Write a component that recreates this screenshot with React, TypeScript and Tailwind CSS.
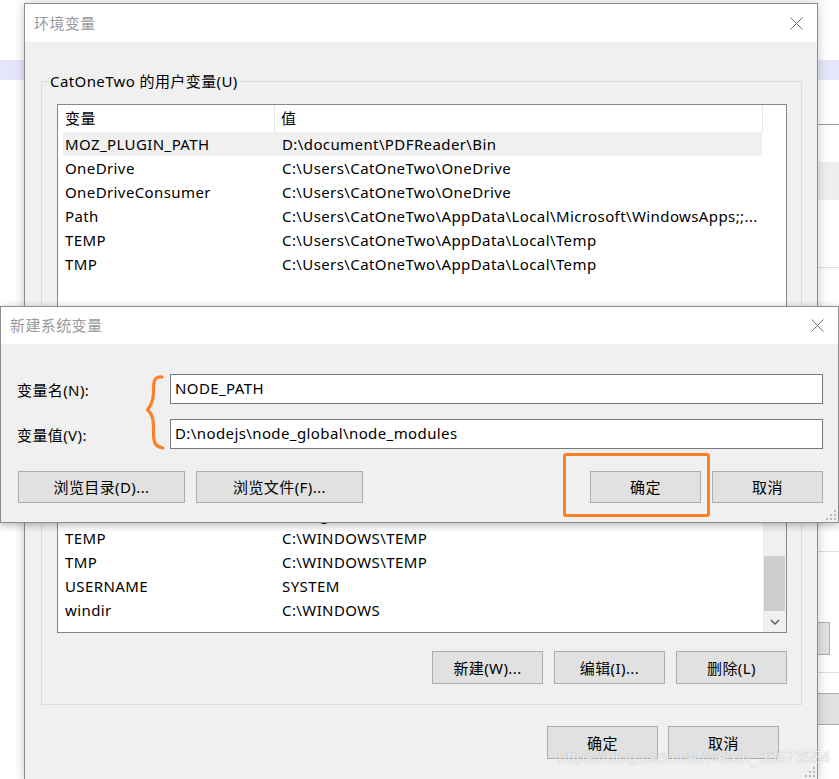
import type { ReactNode } from 'react'

const userVars = [
  ['MOZ_PLUGIN_PATH', 'D:\\document\\PDFReader\\Bin'],
  ['OneDrive', 'C:\\Users\\CatOneTwo\\OneDrive'],
  ['OneDriveConsumer', 'C:\\Users\\CatOneTwo\\OneDrive'],
  ['Path', 'C:\\Users\\CatOneTwo\\AppData\\Local\\Microsoft\\WindowsApps;;...'],
  ['TEMP', 'C:\\Users\\CatOneTwo\\AppData\\Local\\Temp'],
  ['TMP', 'C:\\Users\\CatOneTwo\\AppData\\Local\\Temp'],
]

const systemVars = [
  ['NUMBER_OF_PROCESSORS', '8'],
  ['OS', 'Windows_NT'],
  ['Path', 'C:\\WINDOWS\\system32;C:\\WINDOWS;C:\\WINDOWS\\System32\\Wbem;...'],
  ['PSModulePath', '%ProgramFiles%\\WindowsPowerShell\\Modules;C:\\WINDOWS\\...'],
  ['TEMP', 'C:\\WINDOWS\\TEMP'],
  ['TMP', 'C:\\WINDOWS\\TEMP'],
  ['USERNAME', 'SYSTEM'],
  ['windir', 'C:\\WINDOWS'],
]

function CloseIcon() {
  return (
    <svg width="13" height="13" viewBox="0 0 13 13">
      <path d="M0.5 0.5L12.5 12.5M12.5 0.5L0.5 12.5" stroke="#707070" strokeWidth="1" />
    </svg>
  )
}

function Grip() {
  return (
    <svg width="12" height="12" viewBox="0 0 12 12" fill="#b8b8b8">
      <rect x="9" y="1" width="2" height="2" />
      <rect x="5" y="5" width="2" height="2" />
      <rect x="9" y="5" width="2" height="2" />
      <rect x="1" y="9" width="2" height="2" />
      <rect x="5" y="9" width="2" height="2" />
      <rect x="9" y="9" width="2" height="2" />
    </svg>
  )
}

function Btn({ children, w, h = 'h-[33px]' }: { children: ReactNode; w: string; h?: string }) {
  return (
    <div className={`flex shrink-0 items-center justify-center border border-[#adadad] bg-[#e1e1e1] leading-[20px] ${w} ${h}`}>
      {children}
    </div>
  )
}

function Row({ name, value, selected }: { name: string; value: string; selected?: boolean }) {
  return (
    <div className={`flex h-[24px] shrink-0 items-center leading-[24px] ${selected ? 'bg-[#f0f0f0]' : ''}`}>
      <div className="w-[212px] shrink-0 truncate pl-[2px]">{name}</div>
      <div className="min-w-0 flex-1 truncate whitespace-nowrap pl-[7px]">{value}</div>
    </div>
  )
}

export default function App() {
  return (
    <div className="relative h-[779px] w-[839px] overflow-hidden bg-white font-['Noto_Sans','Noto_Sans_CJK_SC',sans-serif] text-[15px] tracking-[0.4px] text-black">
      {/* page behind the dialogs */}
      <div className="flex h-full w-full justify-between">
        <div className="flex w-[24px] flex-col">
          <div className="h-[60px]" />
          <div className="h-[20px] bg-[#e6e6fa]" />
        </div>
        <div className="flex w-[22px] flex-col">
          <div className="h-[60px]" />
          <div className="h-[20px] bg-[#e6e6fa]" />
          <div className="h-[44px]" />
          <div className="h-px bg-[#9c9c9c]" />
          <div className="h-[37px]" />
          <div className="h-[38px] bg-[#efefef]" />
          <div className="h-[67px]" />
          <div className="h-px bg-[#dedede]" />
          <div className="h-[283px]" />
          <div className="h-px bg-[#dedede]" />
          <div className="h-[70px]" />
          <div className="h-[33px] w-[13px] border border-[#adadad] bg-[#e1e1e1]" />
          <div className="h-[17px]" />
          <div className="h-px bg-[#dedede]" />
          <div className="h-[20px]" />
          <div className="h-[32px] border-y border-[#adadad] bg-[#e1e1e1]" />
        </div>
      </div>

      {/* 环境变量 dialog */}
      <div className="absolute left-[24px] top-[3px] flex h-[778px] w-[794px] flex-col border border-[#8e8e8e] bg-[#f0f0f0] shadow-[0_0_10px_rgba(0,0,0,0.22)]">
        <div className="flex h-[38px] shrink-0 items-center justify-between bg-white pl-[9px] pr-[14px] text-[#9a9a9a]">
          <span>环境变量</span>
          <CloseIcon />
        </div>
        <div className="flex min-w-0 flex-1 flex-col pl-[16px] pr-[15px]">
          <fieldset className="mt-[29px] min-w-0 border border-[#dcdcdc]">
            <legend className="ml-[7px] px-[1px] leading-[20px]">CatOneTwo 的用户变量(U)</legend>
            <div className="pb-[20px] pl-[15px] pr-[14px]">
              <div className="mt-[13px] flex h-[215px] flex-col border border-[#828790] bg-white">
                <div className="flex h-[27px] shrink-0">
                  <div className="w-[5px]" />
                  <div className="flex w-[700px] items-center">
                    <div className="w-[212px] border-r border-[#e5e5e5] pl-[2px] leading-[27px]">变量</div>
                    <div className="flex-1 border-r border-[#e5e5e5] pl-[6px] leading-[27px]">值</div>
                  </div>
                </div>
                <div className="ml-[5px] flex w-[699px] flex-col">
                  {userVars.map(([n, v], i) => (
                    <Row key={n} name={n} value={v} selected={i === 0} />
                  ))}
                </div>
              </div>
              <div className="mt-[18px] flex justify-end gap-[11px]">
                <Btn w="w-[111px]">新建(N)...</Btn>
                <Btn w="w-[111px]">编辑(E)...</Btn>
                <Btn w="w-[111px]">删除(D)</Btn>
              </div>
            </div>
          </fieldset>

          <fieldset className="mt-[29px] min-w-0 border border-[#dcdcdc]">
            <legend className="ml-[7px] px-[1px] leading-[20px]">系统变量(S)</legend>
            <div className="pb-[20px] pl-[15px] pr-[14px]">
              <div className="mt-[13px] flex h-[180px] border border-[#828790] bg-white">
                <div className="flex w-0 min-w-0 flex-1 flex-col justify-end overflow-hidden pb-[10px] pl-[5px]">
                  {systemVars.map(([n, v]) => (
                    <Row key={n} name={n} value={v} />
                  ))}
                </div>
                <div className="flex w-[23px] shrink-0 flex-col justify-end bg-[#f0f0f0]">
                  <div className="mx-[1px] h-[55px] bg-[#cdcdcd]" />
                  <div className="flex h-[21px] items-center justify-center">
                    <svg width="10" height="6" viewBox="0 0 10 6">
                      <path d="M1 1L5 5L9 1" fill="none" stroke="#606060" strokeWidth="1.5" />
                    </svg>
                  </div>
                </div>
              </div>
              <div className="mt-[18px] flex justify-end gap-[11px]">
                <Btn w="w-[111px]">新建(W)...</Btn>
                <Btn w="w-[111px]">编辑(I)...</Btn>
                <Btn w="w-[111px]">删除(L)</Btn>
              </div>
            </div>
          </fieldset>

          <div className="mt-[21px] flex justify-end gap-[10px] pr-[23px]">
            <Btn w="w-[111px]">确定</Btn>
            <Btn w="w-[111px]">取消</Btn>
          </div>
        </div>
        <div className="absolute bottom-[2px] right-[1px]">
          <Grip />
        </div>
      </div>

      {/* 新建系统变量 dialog */}
      <div className="absolute left-0 top-[306px] flex h-[217px] w-[839px] flex-col border border-[#8e8e8e] bg-[#f0f0f0] shadow-[0_2px_8px_rgba(0,0,0,0.3)]">
        <div className="flex h-[37px] shrink-0 items-center justify-between bg-white pl-[9px] pr-[14px] text-[#9a9a9a]">
          <span>新建系统变量</span>
          <CloseIcon />
        </div>
        <div className="flex flex-1 flex-col pt-[30px]">
          <div className="flex items-center pr-[15px]">
            <div className="w-[169px] shrink-0 pl-[16px] pt-[2px] leading-[20px]">变量名(N):</div>
            <div className="flex h-[30px] min-w-0 flex-1 items-center border border-[#7a7a7a] bg-white pb-[2px] pl-[4px] leading-[20px]">NODE_PATH</div>
          </div>
          <div className="mt-[15px] flex items-center pr-[15px]">
            <div className="w-[169px] shrink-0 pl-[16px] pt-[2px] leading-[20px]">变量值(V):</div>
            <div className="flex h-[30px] min-w-0 flex-1 items-center border border-[#7a7a7a] bg-white pb-[2px] pl-[4px] leading-[20px]">D:\nodejs\node_global\node_modules</div>
          </div>
          <div className="mt-[22px] flex justify-between pl-[17px] pr-[15px]">
            <div className="flex gap-[11px]">
              <Btn w="w-[167px]" h="h-[32px]">浏览目录(D)...</Btn>
              <Btn w="w-[167px]" h="h-[32px]">浏览文件(F)...</Btn>
            </div>
            <div className="flex gap-[11px]">
              <Btn w="w-[111px]" h="h-[32px]">确定</Btn>
              <Btn w="w-[111px]" h="h-[32px]">取消</Btn>
            </div>
          </div>
        </div>
        <div className="absolute bottom-[1px] right-[1px]">
          <Grip />
        </div>
      </div>

      {/* annotations */}
      <svg className="absolute left-[144px] top-[374px]" width="24" height="78" viewBox="0 0 24 78">
        <path
          d="M18 3C12 2 9.5 6 9.5 12C9.5 20 10 28 3.5 36C10 41 9.5 50 9.5 60C9.5 69 12 73 19 74"
          fill="none"
          stroke="#ff7f27"
          strokeWidth="3.2"
          strokeLinecap="round"
          strokeLinejoin="round"
        />
      </svg>
      <div className="absolute left-[563px] top-[453px] h-[64px] w-[147px] rounded-[3px] border-[3px] border-[#ff7f27]" />

      <div className="absolute left-[558px] top-[748px] font-['Liberation_Sans',sans-serif] text-[16px] leading-[20px] tracking-normal text-white/85 [text-shadow:0_0_1px_rgba(0,0,0,0.35)]">
        https://blog.csdn.net/weixin_38673554
      </div>
    </div>
  )
}
